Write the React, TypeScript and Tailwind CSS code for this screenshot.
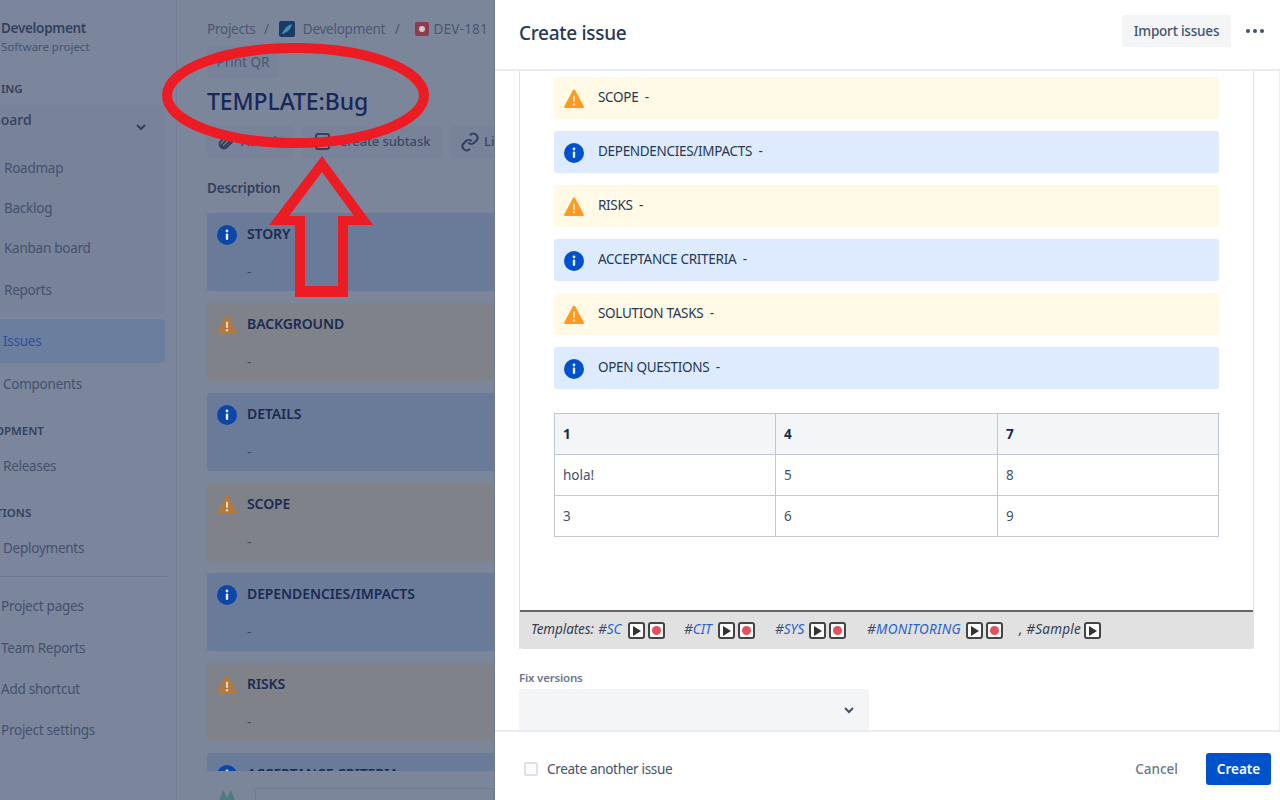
import React from "react";

const Info = ({ size = 20, color = "#0b46a8", cls = "" }: { size?: number; color?: string; cls?: string }) => (
  <svg width={size} height={size} viewBox="0 0 20 20" className={`shrink-0 ${cls}`}>
    <circle cx="10" cy="10" r="10" fill={color} />
    <circle cx="10" cy="6" r="1.400" fill="#fff" opacity="0.9" />
    <rect x="8.800" y="8.600" width="2.400" height="6.400" rx="1" fill="#fff" opacity="0.9" />
  </svg>
);

const Warn = ({ size = 20, color = "#b27a3e", cls = "" }: { size?: number; color?: string; cls?: string }) => (
  <svg width={size} height={size} viewBox="0 0 20 20" className={`shrink-0 ${cls}`}>
    <path d="M8.700 1.400c.7-1.200 1.900-1.200 2.600 0L19.700 17.300c.5 1-.1 1.700-1.200 1.700H1.500C.4 19-.2 18.300.3 17.300z" fill={color} />
    <rect x="9" y="6.500" width="2" height="6.500" rx="1" fill="#fff" opacity="0.7" />
    <circle cx="10" cy="15.300" r="1.200" fill="#fff" opacity="0.7" />
  </svg>
);

const SideItem = ({ label, h, left = "pl-1", active }: { label: string; h: string; left?: string; active?: boolean }) => (
  <div className={`flex items-center text-[13.500px] tracking-[-0.25px] whitespace-nowrap ${h} ${left} ${active ? "text-[#2f4f9a]" : "text-[#44506c]"}`}>{label}</div>
);

const SideHead = ({ label, cls }: { label: string; cls: string }) => (
  <div className={`h-[18px] flex items-center text-[11.500px] font-semibold text-[#333f5e] whitespace-nowrap ${cls}`}>{label}</div>
);

const BgPanel = ({ kind, title }: { kind: "info" | "warn"; title: string }) => (
  <div className={`shrink-0 h-[78px] w-[330px] rounded-[3px] mb-3 pt-3 pl-[10px] flex gap-[10px] ${kind === "info" ? "bg-[#6a7b99]" : "bg-[#7f8389]"}`}>
    {kind === "info" ? <Info /> : <Warn />}
    <div>
      <div className="text-[14px] font-semibold leading-[20px] -mt-[1px] tracking-[-0.1px] text-[#1b2a52] whitespace-nowrap">{title}</div>
      <div className="text-[14px] leading-[20px] mt-[18px] text-[#3e4a68]">-</div>
    </div>
  </div>
);

const GhostBtn = ({ children, cls }: { children: React.ReactNode; cls: string }) => (
  <div className={`h-8 rounded-[3px] bg-[#78839a] flex items-center shrink-0 font-medium text-[#3b4766] whitespace-nowrap ${cls}`}>{children}</div>
);

const FormPanel = ({ kind, title }: { kind: "info" | "warn"; title: string }) => (
  <div className={`h-[42px] rounded-[3px] mb-3 pl-[10px] flex items-center gap-[14px] ${kind === "info" ? "bg-[#deebff]" : "bg-[#fff9e6]"}`}>
    {kind === "info" ? <Info color="#0052cc" cls="mt-[2px]" /> : <Warn color="#ff991f" cls="mt-[2px]" />}
    <span className="text-[13.500px] tracking-[-0.3px] pb-[1px] text-[#253858] whitespace-pre">{title}  -</span>
  </div>
);

const Play = ({ cls = "" }: { cls?: string }) => (
  <span className={`inline-flex items-center justify-center w-[17px] h-[17px] rounded-[3px] border-2 border-[#444] bg-white ${cls}`}>
    <svg width="9" height="10" viewBox="0 0 9 10"><path d="M1 0l8 5-8 5z" fill="#333" /></svg>
  </span>
);
const Rec = ({ cls = "" }: { cls?: string }) => (
  <span className={`inline-flex items-center justify-center w-[17px] h-[17px] rounded-[3px] border-2 border-[#444] bg-white ${cls}`}>
    <svg width="9" height="9" viewBox="0 0 9 9"><circle cx="4.500" cy="4.500" r="4.500" fill="#e5505f" /></svg>
  </span>
);

const Tag = ({ t, cls }: { t: string; cls: string }) => (
  <span className={`italic text-[13.500px] mb-[2px] text-[#2a62c9] ${cls}`}><span className="text-[#3c4a66]">#</span>{t}</span>
);

const Td = ({ children, cls = "" }: { children: React.ReactNode; cls?: string }) => (
  <td className={`border border-[#c1c7d0] pl-2 ${cls}`}>{children}</td>
);

export default function App() {
  return (
    <div className="relative flex w-[1280px] h-[800px] overflow-hidden font-['Noto_Sans','Open_Sans',sans-serif] bg-white">
      {/* dimmed page */}
      <div className="w-[495px] h-full shrink-0 flex bg-[#7c869b] border-r border-[#717b92]">
        <aside className="w-[177px] h-full shrink-0 border-r border-[#737e96] bg-[#7b869c] pt-[18px] overflow-hidden">
          <div className="h-5 pl-[1px] flex items-center text-[13.500px] tracking-[-0.3px] font-semibold text-[#333f5e]">Development</div>
          <div className="h-[18px] pl-[1px] flex items-center text-[11.500px] text-[#485470]">Software project</div>
          <SideHead label="ING" cls="mt-6 pl-[1px]" />
          <div className="mt-[7px] w-[165px] h-[209px] rounded-r-[3px] bg-[#78839a]">
            <div className="h-[43px] flex items-start justify-between pr-[18px]">
              <span className="text-[14px] font-medium text-[#333f5e] -ml-[8px] mt-[4px]">board</span>
              <svg width="12" height="12" viewBox="0 0 12 12" className="mt-4"><path d="M2 4l4 4 4-4" fill="none" stroke="#333f5e" strokeWidth="2" /></svg>
            </div>
            <SideItem label="Roadmap" h="h-10" />
            <SideItem label="Backlog" h="h-10" />
            <SideItem label="Kanban board" h="h-10" />
            <SideItem label="Reports" h="h-[44px]" />
          </div>
          <div className="mt-[5px] w-[165px] h-[44px] rounded-r-[3px] bg-[#6c7e9d]">
            <SideItem label="Issues" h="h-[44px]" left="pl-[3px]" active />
          </div>
          <SideItem label="Components" h="h-[42px]" left="pl-[3px]" />
          <SideHead label="OPMENT" cls="mt-[17px] -ml-[5px]" />
          <SideItem label="Releases" h="h-[42px] mt-[5px]" left="pl-[3px]" />
          <SideHead label="TIONS" cls="mt-[17px] -ml-[4px]" />
          <SideItem label="Deployments" h="h-[42px] mt-[5px]" left="pl-[3px]" />
          <div className="mt-[7px] w-[167px] h-[1px] bg-[#6f7a92]" />
          <SideItem label="Project pages" h="h-[42px] mt-2" left="pl-[1px]" />
          <SideItem label="Team Reports" h="h-[42px]" left="pl-[1px]" />
          <SideItem label="Add shortcut" h="h-10" left="pl-[1px]" />
          <SideItem label="Project settings" h="h-[42px]" left="pl-[1px]" />
        </aside>

        <main className="flex-1 min-w-0 h-full flex flex-col overflow-hidden">
          <div className="h-[771px] shrink-0 overflow-hidden pl-[30px] flex flex-col">
            <div className="h-5 mt-[19px] flex items-center text-[13.500px] tracking-[-0.25px] text-[#4a5672] whitespace-nowrap shrink-0">
              <span className="w-[49px]">Projects</span>
              <span className="ml-[8px]">/</span>
              <svg width="16" height="16" viewBox="0 0 16 16" className="ml-[10px] shrink-0">
                <rect width="16" height="16" rx="2" fill="#1c3a66" />
                <path d="M3.500 12.500c.8-4 4.500-8 9.500-9.500-1 5-4.500 8.700-9.500 9.500z" fill="#3f8fb5" />
                <path d="M3 13l2-1-1-1z" fill="#5fb0a8" />
              </svg>
              <span className="ml-2 w-[84px]">Development</span>
              <span className="ml-[8px]">/</span>
              <span className="ml-[15px] w-[14px] h-[14px] rounded-[2px] bg-[#8f3b50] flex items-center justify-center shrink-0">
                <span className="w-[6px] h-[6px] rounded-full bg-[#cfc8cc]" />
              </span>
              <span className="ml-[5px] tracking-[0.2px]">DEV-181</span>
            </div>
            <GhostBtn cls="mt-[7px] w-[72px] justify-center font-normal text-[#4a5672] text-[13.500px]">Print QR</GhostBtn>
            <div className="mt-[6px] h-[34px] flex items-center text-[23px] tracking-[-0.1px] font-medium text-[#17275a] whitespace-nowrap shrink-0">TEMPLATE:Bug</div>
            <div className="mt-[8px] flex gap-2 shrink-0">
              <GhostBtn cls="w-[87px] pl-[10px] gap-[6px] text-[13px]">
                <svg width="18" height="18" viewBox="0 0 24 24" fill="none" stroke="#333f5e" strokeWidth="2.500"><path d="M21 11l-9 9a6 6 0 0 1-8-8l9-9a4 4 0 0 1 6 6l-9 9a2 2 0 0 1-3-3l8-8" /></svg>
                <span>Attach</span>
              </GhostBtn>
              <GhostBtn cls="w-[140px] pl-[12px] gap-[7px] text-[13px] tracking-[-0.1px]">
                <svg width="18" height="18" viewBox="0 0 18 18" fill="none" stroke="#333f5e" strokeWidth="2"><rect x="2" y="1" width="13" height="15" rx="2" /></svg>
                <span>Create subtask</span>
              </GhostBtn>
              <GhostBtn cls="w-[100px] pl-[10px] gap-1 text-[13px]">
                <svg width="20" height="20" viewBox="0 0 24 24" fill="none" stroke="#333f5e" strokeWidth="2.500"><path d="M10 13a5 5 0 0 0 7 0l3-3a5 5 0 0 0-7-7l-1 1" /><path d="M14 11a5 5 0 0 0-7 0l-3 3a5 5 0 0 0 7 7l1-1" /></svg>
                <span>Link issue</span>
              </GhostBtn>
            </div>
            <div className="mt-5 h-5 flex items-center text-[13.500px] tracking-[-0.2px] font-semibold text-[#333f5e] shrink-0">Description</div>
            <div className="mt-[15px] flex flex-col">
              <BgPanel kind="info" title="STORY" />
              <BgPanel kind="warn" title="BACKGROUND" />
              <BgPanel kind="info" title="DETAILS" />
              <BgPanel kind="warn" title="SCOPE" />
              <BgPanel kind="info" title="DEPENDENCIES/IMPACTS" />
              <BgPanel kind="warn" title="RISKS" />
              <BgPanel kind="info" title="ACCEPTANCE CRITERIA" />
            </div>
          </div>
          <div className="flex-1 pl-[40px] pt-[17px] flex gap-[16px] overflow-hidden">
            <svg width="22" height="14" viewBox="0 0 22 14" className="shrink-0 mt-[1px]"><path d="M2 12L6 1l4 8 4-8 4 11z" fill="#4f7a80" /></svg>
            <div className="flex-1 h-12 rounded-[3px] border border-[#6f7a92]" />
          </div>
        </main>
      </div>

      {/* modal */}
      <section className="flex-1 min-w-0 h-full flex flex-col bg-white">
        <header className="h-[71px] shrink-0 border-b-2 border-[#ebecf0] pl-6 pr-[15px] flex items-center justify-between">
          <h1 className="text-[19px] tracking-[-0.3px] font-medium text-[#253858] -mt-[2px]">Create issue</h1>
          <div className="flex items-center gap-[14px] -mt-[8px]">
            <div className="h-8 w-[109px] pt-[2px] rounded-[3px] bg-[#f4f5f7] flex items-center justify-center text-[13.500px] tracking-[-0.2px] font-medium text-[#42526e]">Import issues</div>
            <svg width="20" height="6" viewBox="0 0 20 6"><circle cx="3" cy="3" r="2" fill="#42526e" /><circle cx="10" cy="3" r="2" fill="#42526e" /><circle cx="17" cy="3" r="2" fill="#42526e" /></svg>
          </div>
        </header>

        <div className="flex-1 min-h-0 overflow-hidden pl-6 pr-[1px] border-r border-[#ebecf0]">
          <div className="w-[735px] border-x border-[#dfe1e6]">
            <div className="h-[539px] pt-[6px] pl-[34px] pr-[34px]">
              <FormPanel kind="warn" title="SCOPE" />
              <FormPanel kind="info" title="DEPENDENCIES/IMPACTS" />
              <FormPanel kind="warn" title="RISKS" />
              <FormPanel kind="info" title="ACCEPTANCE CRITERIA" />
              <FormPanel kind="warn" title="SOLUTION TASKS" />
              <FormPanel kind="info" title="OPEN QUESTIONS" />
              <table className="mt-6 w-[665px] table-fixed border-collapse text-[13.500px] text-[#42526e]">
                <tbody>
                  <tr className="h-[41px] bg-[#f4f5f7] font-bold text-[#172b4d]">
                    <Td cls="w-[221px]">1</Td>
                    <Td cls="w-[222px]">4</Td>
                    <Td>7</Td>
                  </tr>
                  <tr className="h-[41px]">
                    <Td>hola!</Td>
                    <Td>5</Td>
                    <Td>8</Td>
                  </tr>
                  <tr className="h-[41px]">
                    <Td>3</Td>
                    <Td>6</Td>
                    <Td>9</Td>
                  </tr>
                </tbody>
              </table>
            </div>
            <div className="h-[39px] border-t-2 border-[#666] bg-[#e1e1e1] rounded-b-[3px] flex items-center pl-[11px] whitespace-nowrap">
              <span className="italic text-[13.500px] tracking-[-0.1px] mb-[2px] text-[#333f55] w-[63px]">Templates:</span>
              <Tag t="SC" cls="ml-1 w-[24px]" />
              <Play cls="ml-[6px]" />
              <Rec cls="ml-[3px]" />
              <Tag t="CIT" cls="ml-[19px] w-[29px]" />
              <Play cls="ml-[5px]" />
              <Rec cls="ml-[3px]" />
              <Tag t="SYS" cls="ml-[20px] w-[30px]" />
              <Play cls="ml-[4px]" />
              <Rec cls="ml-[3px]" />
              <Tag t="MONITORING" cls="ml-[21px] w-[93px] tracking-[0.3px]" />
              <Play cls="ml-[6px]" />
              <Rec cls="ml-[3px]" />
              <span className="italic text-[13.500px] mb-[2px] text-[#333f55] ml-[16px] w-[60px] tracking-[0.2px]">, #Sample</span>
              <Play cls="ml-[5px]" />
            </div>
          </div>
          <div className="mt-[21px] h-4 flex items-center text-[11.500px] tracking-[-0.2px] font-semibold text-[#6b778c]">Fix versions</div>
          <div className="mt-[3px] w-[350px] h-[42px] rounded-[3px] bg-[#f4f5f7] flex items-center justify-end pr-[14px]">
            <svg width="12" height="12" viewBox="0 0 12 12"><path d="M2 4l4 4 4-4" fill="none" stroke="#42526e" strokeWidth="2" /></svg>
          </div>
        </div>

        <footer className="h-[70px] shrink-0 border-t-2 border-[#ebecf0] pl-[29px] pr-[9px] flex items-center justify-between">
          <label className="flex items-center gap-[9px] mt-[6px]">
            <span className="w-[14px] h-[14px] rounded-[2px] border-2 border-[#dfe1e6] bg-[#fafbfc]" />
            <span className="text-[13.500px] tracking-[-0.3px] text-[#42526e]">Create another issue</span>
          </label>
          <div className="flex items-center gap-[28px] mt-[6px]">
            <span className="text-[13.500px] font-medium text-[#6b778c]">Cancel</span>
            <div className="w-[65px] h-8 rounded-[3px] bg-[#0052cc] flex items-center justify-center text-[13.500px] font-semibold text-white">Create</div>
          </div>
        </footer>
      </section>

      {/* hand-drawn annotations */}
      <svg className="absolute left-0 top-0 pointer-events-none" width="495" height="310" viewBox="0 0 495 310">
        <ellipse cx="295.500" cy="95.500" rx="128.500" ry="47.500" fill="none" stroke="#ed1c24" strokeWidth="10" />
        <path fillRule="evenodd" fill="#ed1c24" d="M322 156L373 225H348V297H295V225H269zM322 172L289 216H305V286H338V216H354z" />
      </svg>
    </div>
  );
}
